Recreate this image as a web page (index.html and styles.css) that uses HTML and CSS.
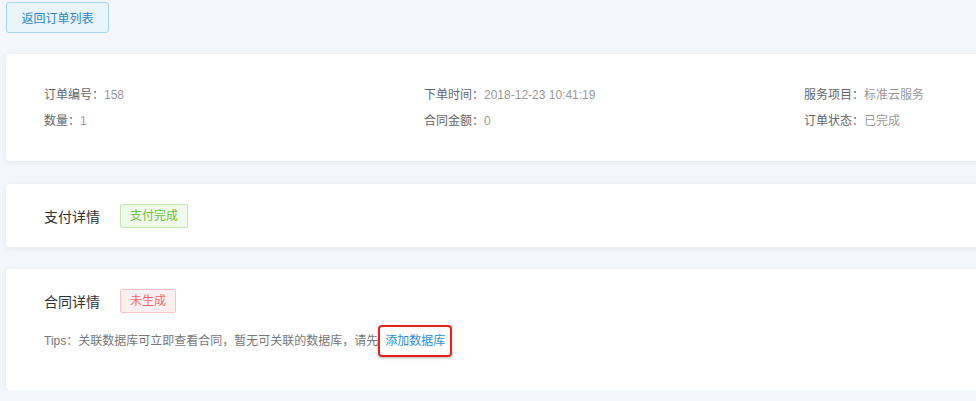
FILE: index.html
```html
<!DOCTYPE html>
<html lang="zh-CN">
<head>
    <meta charset="UTF-8">
    <meta name="viewport" content="width=device-width, initial-scale=1.0">
    <title>订单详情</title>
    <link rel="stylesheet" href="styles.css">
</head>
<body>

    <div class="page">
        <button class="back-btn">返回订单列表</button>

        <div class="card order-card">
            <div class="info-grid">
                <div class="info-item"><span class="label">订单编号：</span><span class="value">158</span></div>
                <div class="info-item"><span class="label">下单时间：</span><span class="value">2018-12-23 10:41:19</span></div>
                <div class="info-item"><span class="label">服务项目：</span><span class="value">标准云服务</span></div>
                <div class="info-item"><span class="label">数量：</span><span class="value">1</span></div>
                <div class="info-item"><span class="label">合同金额：</span><span class="value">0</span></div>
                <div class="info-item"><span class="label">订单状态：</span><span class="value">已完成</span></div>
            </div>
        </div>

        <div class="card section-card">
            <div class="section-head">
                <span class="section-title">支付详情</span>
                <span class="tag tag-success">支付完成</span>
            </div>
        </div>

        <div class="card section-card contract-card">
            <div class="section-head">
                <span class="section-title">合同详情</span>
                <span class="tag tag-danger">未生成</span>
            </div>
            <div class="tips">
                <span>Tips：关联数据库可立即查看合同，暂无可关联的数据库，请先</span>
                <a class="tips-link" href="#">添加数据库</a>
            </div>
        </div>
    </div>

</body>
</html>
```

FILE: styles.css
```css
body {
    margin: 0;
    background-color: #f3f6fa;
    font-family: "Helvetica Neue", "Liberation Sans", "Noto Sans CJK SC", sans-serif;
    overflow: hidden;
}

.page {
    width: 1216px;
    padding: 2px 0 0 6px;
}

.back-btn {
    display: block;
    width: 103px;
    height: 31px;
    padding: 0;
    font-family: inherit;
    font-size: 12px;
    color: #2b86c5;
    background-color: #eaf4fb;
    border: 1px solid #a7d4f0;
    border-radius: 3px;
    cursor: pointer;
}

.card {
    background-color: white;
    border-radius: 4px;
    box-shadow: 0px 1px 6px rgba(0, 0, 0, 0.08);
}

.order-card {
    margin-top: 21px;
    padding: 32px 38px 31px;
}

.info-grid {
    display: grid;
    grid-template-columns: repeat(3, 380px);
    row-gap: 8px;
    font-size: 12px;
    line-height: 18px;
}

.label {
    color: #666;
}

.value {
    color: #999;
}

.section-card {
    margin-top: 23px;
    padding: 20px 38px 19px;
}

.section-head {
    display: flex;
    align-items: center;
}

.section-title {
    width: 76px;
    font-size: 14px;
    color: #333;
}

.tag {
    box-sizing: border-box;
    height: 24px;
    line-height: 22px;
    padding: 0 9px;
    font-size: 12px;
    border: 1px solid;
    border-radius: 2px;
}

.tag-success {
    color: #67c23a;
    background-color: #f0f9eb;
    border-color: #c2e7b0;
}

.tag-danger {
    color: #f56c6c;
    background-color: #fef0f0;
    border-color: #fbc4c4;
}

.contract-card {
    margin-top: 22px;
    padding-bottom: 33px;
}

.tips {
    display: flex;
    align-items: center;
    margin-top: 12px;
    font-size: 12px;
    line-height: 18px;
    color: #777;
}

.tips-link {
    padding: 5px 5px;
    color: #2d8fd0;
    text-decoration: none;
    border: 2px solid #e8211c;
    border-radius: 4px;
    box-shadow: 0px 1px 3px rgba(0, 0, 0, 0.3);
}
```
